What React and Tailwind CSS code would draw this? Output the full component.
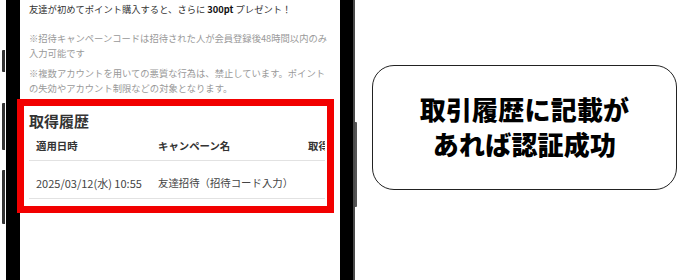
const jp = { fontFamily: '"Noto Sans CJK JP", "Noto Sans", sans-serif' }

// each note keeps the phone's own line breaks
const notes = [
  ['※招待キャンペーンコードは招待された人が会員登録後48時間以内のみ', '入力可能です'],
  ['※複数アカウントを用いての悪質な行為は、禁止しています。ポイント', 'の失効やアカウント制限などの対象となります。'],
]

const columns = [
  { label: '適用日時', width: 'w-[122px]' },
  { label: 'キャンペーン名', width: 'w-[150px]' },
  { label: '取得ポイント', width: 'w-[110px]' },
]

// third value sits past the scroll edge, so it is left blank here
const history = [{ date: '2025/03/12(水) 10:55', name: '友達招待（招待コード入力）' }]

function PhoneScreen() {
  return (
    <div className="w-[320px] h-full bg-white pl-[9px] pr-[15px] pt-[2px]">
      <p className="text-[9.3px] leading-[15px] text-[#333]">
        友達が初めてポイント購入すると、さらに <b className="text-[#111]">300pt</b> プレゼント！
      </p>
      <div className="mt-[14px] mr-[-6px] flex flex-col gap-[5px] text-[9.3px] leading-[15px] text-[#999] whitespace-nowrap">
        {notes.map((lines) => (
          <p key={lines[0]}>
            {lines[0]}
            <br />
            {lines[1]}
          </p>
        ))}
      </div>

      {/* 取得履歴 */}
      <h3 className="mt-[15px] text-[15px] leading-[20px] font-semibold text-[#333]">取得履歴</h3>
      <div className="overflow-hidden">
        <div className="flex h-[30px] items-center border-b border-[#e2e2e2] w-max">
          {columns.map((c) => (
            <div key={c.label} className={`${c.width} shrink-0 pl-[7px] text-[10.4px] font-bold text-[#333] whitespace-nowrap`}>
              {c.label}
            </div>
          ))}
        </div>
        {history.map((row) => (
          <div key={row.date} className="flex h-[38px] pt-[15px] border-b border-[#e2e2e2] w-max text-[#444] whitespace-nowrap">
            <div className="w-[122px] shrink-0 pl-[7px] text-[11px] leading-[14px]">{row.date}</div>
            <div className="w-[150px] shrink-0 pl-[7px] text-[10.4px] leading-[14px]">{row.name}</div>
            <div className="w-[110px] shrink-0" />
          </div>
        ))}
      </div>
    </div>
  )
}

export default function App() {
  return (
    <div className="relative w-[680px] h-[280px] bg-white flex overflow-hidden" style={jp}>
      {/* side buttons, left */}
      <div className="w-[6px] flex flex-col items-end pt-[50px] pr-[1px]">
        <div className="w-[3px] h-[22px] bg-[#333] rounded-l-[1px]" />
        <div className="w-[3px] h-[47px] mt-[31px] bg-[#333] rounded-l-[1px]" />
        <div className="w-[3px] h-[54px] mt-[20px] bg-[#333] rounded-l-[1px]" />
      </div>
      <div className="w-[14px] bg-black" />

      <PhoneScreen />

      <div className="w-[13px] bg-black" />
      <div className="w-[2px] bg-[#4a4a4a]" />
      <div className="w-[2px] pt-[122px]">
        <div className="h-[85px] bg-[#555] rounded-r-[1px]" />
      </div>

      {/* callout */}
      <div className="ml-[15px] mt-[65px] w-[305px] h-[125px] self-start rounded-[22px] border border-[#222] flex flex-col items-center justify-center pb-[4px]">
        <p className="text-[26px] leading-[35px] font-black text-black tracking-[0.2px]">取引履歴に記載が</p>
        <p className="text-[26px] leading-[35px] font-black text-black tracking-[0.2px]">あれば認証成功</p>
      </div>

      {/* red highlight over the history block */}
      <div className="absolute left-[17px] top-[99px] w-[317px] h-[114px] border-[7px] border-[#f20000]" />
    </div>
  )
}
